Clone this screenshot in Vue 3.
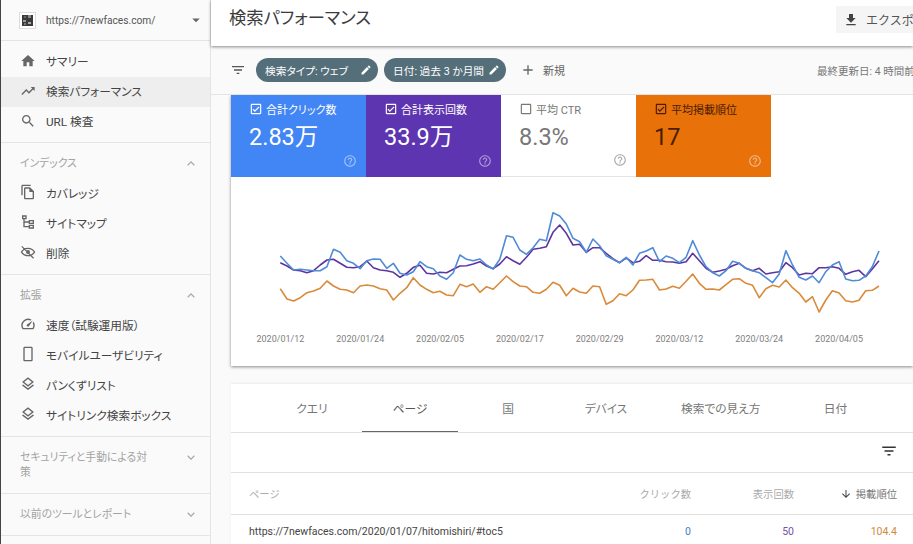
<script setup>
const P = {
  home: 'M10 20v-6h4v6h5v-8h3L12 3 2 12h3v8z',
  trend: 'M16 6l2.29 2.29-4.88 4.88-4-4L2 16.59 3.41 18l6-6 4 4 6.3-6.29L22 12V6z',
  search: 'M15.5 14h-.79l-.28-.27C15.41 12.59 16 11.11 16 9.5 16 5.91 13.09 3 9.5 3S3 5.91 3 9.5 5.91 16 9.5 16c1.61 0 3.09-.59 4.23-1.57l.27.28v.79l5 4.99L20.49 19l-4.99-5zm-6 0C7.01 14 5 11.99 5 9.5S7.01 5 9.5 5 14 7.01 14 9.5 11.99 14 9.5 14z',
  copy: 'M16 1H4c-1.1 0-2 .9-2 2v14h2V3h12V1zm-1 4H8c-1.1 0-1.99.9-1.99 2L6 21c0 1.1.89 2 1.99 2H19c1.1 0 2-.9 2-2V11l-6-6zM8 21V7h6v5h5v9H8z',
  map: 'M3 2h7v6H7v3h6V9h8v6h-8v-2H7v5h6v-2h8v6h-8v-2H5V8H3zM5 4v2h3V4zM15 11v2h4v-2zM15 18v2h4v-2z',
  eye: 'M12 5.5c-5 0-9.2 3-11 6.5 1.8 3.500 6 6.500 11 6.500s9.200-3 11-6.500c-1.800-3.500-6-6.500-11-6.500zm0 2c3.500 0 6.800 1.800 8.700 4.500-1.900 2.700-5.200 4.500-8.700 4.500s-6.800-1.800-8.700-4.500C5.200 9.300 8.500 7.500 12 7.500zM12 9a3 3 0 1 0 0 6 3 3 0 0 0 0-6zM3.300 3 2 4.300 19.700 22l1.300-1.300z',
  speed: 'M20.400 8.600l-1.300 1.900a8 8 0 0 1-.200 7.500H5.100A8 8 0 0 1 15.500 6.900l1.900-1.300A10 10 0 0 0 3.400 19a2 2 0 0 0 1.700 1h13.800a2 2 0 0 0 1.700-1 10 10 0 0 0-.2-10.400zM10.600 15.400a2 2 0 0 0 2.800 0l5.700-8.500-8.500 5.700a2 2 0 0 0 0 2.800z',
  phone: 'M17 1H7c-1.100 0-2 .9-2 2v18c0 1.100.9 2 2 2h10c1.100 0 2-.9 2-2V3c0-1.100-.9-2-2-2zm0 20H7V3h10z',
  layers: 'M11.990 18.540l-7.370-5.730L3 14.070l9 7 9-7-1.630-1.270zM12 16l7.360-5.730L21 9l-9-7-9 7 1.630 1.270L12 16zm0-11.470L17.740 9 12 13.470 6.260 9 12 4.530z',
  filter: 'M10 18h4v-2h-4v2zM3 6v2h18V6H3zm3 7h12v-2H6v2z',
  edit: 'M3 17.250V21h3.750L17.810 9.940l-3.750-3.750L3 17.250zM20.710 7.040c.39-.39.39-1.020 0-1.410l-2.340-2.340c-.39-.39-1.020-.39-1.410 0l-1.830 1.830 3.750 3.750 1.830-1.830z',
  download: 'M19 9h-4V3H9v6H5l7 7 7-7zM5 18v2h14v-2H5z',
  down: 'M20 12l-1.410-1.410L13 16.170V4h-2v12.170l-5.580-5.590L4 12l8 8 8-8z',
  help: 'M11 18h2v-2h-2v2zm1-16C6.480 2 2 6.480 2 12s4.480 10 10 10 10-4.480 10-10S17.520 2 12 2zm0 18c-4.410 0-8-3.590-8-8s3.590-8 8-8 8 3.590 8 8-3.590 8-8 8zm0-14c-2.210 0-4 1.790-4 4h2c0-1.100.9-2 2-2s2 .9 2 2c0 2-3 1.750-3 5h2c0-2.250 3-2.500 3-5 0-2.210-1.790-4-4-4z',
  checked: 'M19 3H5c-1.100 0-2 .9-2 2v14c0 1.100.9 2 2 2h14c1.100 0 2-.9 2-2V5c0-1.100-.9-2-2-2zm0 16H5V5h14v14zM17.990 9l-1.410-1.420-6.590 6.590-2.580-2.570-1.420 1.410 4 3.990z',
  unchecked: 'M19 5v14H5V5h14m0-2H5c-1.100 0-2 .9-2 2v14c0 1.100.9 2 2 2h14c1.100 0 2-.9 2-2V5c0-1.100-.9-2-2-2z',
  plus: 'M19 13h-6v6h-2v-6H5v-2h6V5h2v6h6v2z',
  more: 'M16.590 8.590L12 13.170 7.410 8.590 6 10l6 6 6-6z',
  less: 'M12 8l-6 6 1.410 1.410L12 10.830l4.590 4.580L18 14z',
  drop: 'M7 10l5 5 5-5z'
}

const sections = [
  { items: [
    { icon: 'home', label: 'サマリー' },
    { icon: 'trend', label: '検索パフォーマンス', active: true },
    { icon: 'search', label: 'URL 検査' }
  ] },
  { title: 'インデックス', open: true, items: [
    { icon: 'copy', label: 'カバレッジ' },
    { icon: 'map', label: 'サイトマップ' },
    { icon: 'eye', label: '削除' }
  ] },
  { title: '拡張', open: true, items: [
    { icon: 'speed', label: '速度（試験運用版）' },
    { icon: 'phone', label: 'モバイルユーザビリティ' },
    { icon: 'layers', label: 'パンくずリスト' },
    { icon: 'layers', label: 'サイトリンク検索ボックス' }
  ] },
  { title: 'セキュリティと手動による対策', open: false, items: [] },
  { title: '以前のツールとレポート', open: false, items: [] }
]

const metrics = [
  { label: '合計クリック数', value: '2.83万', cls: 'blue', on: true },
  { label: '合計表示回数', value: '33.9万', cls: 'purple', on: true },
  { label: '平均 CTR', value: '8.3%', cls: 'plain', on: false },
  { label: '平均掲載順位', value: '17', cls: 'orange', on: true }
]

const blue = [168,190,210,208,210,212,212,200,148,157,182,190,206,182,177,178,205,190,220,225,215,185,200,206,228,238,218,165,178,182,177,195,207,178,107,112,150,163,143,118,122,38,48,72,115,125,157,117,137,167,178,188,172,195,160,153,143,185,168,175,188,172,122,165,200,218,228,212,184,190,205,212,218,233,248,222,152,195,232,240,228,248,215,195,185,237,242,241,228,200,153]
const purple = [188,198,210,212,218,212,195,180,178,190,202,203,200,183,203,210,212,217,232,220,202,196,220,222,217,218,208,198,197,192,185,198,206,192,170,182,193,172,148,145,140,97,75,100,135,133,157,143,143,160,176,188,174,188,184,167,181,181,185,186,190,185,160,182,205,217,213,208,197,190,205,212,205,222,218,215,188,203,225,220,221,203,203,200,205,223,215,211,230,207,182]
const orange = [266,297,303,293,278,273,265,243,258,268,270,278,258,255,258,266,270,300,280,263,233,255,268,278,274,285,287,253,260,252,277,260,268,248,228,245,258,260,277,280,268,247,256,287,265,276,280,258,260,313,302,281,287,270,241,240,238,270,267,259,265,244,222,250,268,267,270,254,238,236,250,256,293,266,256,261,240,263,280,306,290,336,300,272,279,302,306,301,272,271,258]

// Source values are read in chart pixels x3; the svg origin sits at y=177.
const toPoints = (s) => s.map((v, i) => `${(49.3 + i * 6.652).toFixed(1)},${(200 + v / 3 - 177).toFixed(1)}`).join(' ')
const series = [
  { color: '#d98a3a', pts: toPoints(orange) },
  { color: '#5e35a0', pts: toPoints(purple) },
  { color: '#4f8bd6', pts: toPoints(blue) }
]
const dates = ['2020/01/12', '2020/01/24', '2020/02/05', '2020/02/17', '2020/02/29', '2020/03/12', '2020/03/24', '2020/04/05']
const tabs = ['クエリ', 'ページ', '国', 'デバイス', '検索での見え方', '日付']
</script>

<template>
  <div class="app">
    <aside class="side">
      <div class="prop">
        <svg class="fav" viewBox="0 0 17 17">
          <rect x=".5" y=".5" width="16" height="16" fill="#fff" stroke="#ddd" />
          <rect x="3" y="3" width="11" height="11" fill="#3a3a3a" />
          <rect x="9" y="3" width="3" height="3" fill="#888" />
          <rect x="4" y="8" width="3" height="2" fill="#999" />
          <rect x="9" y="10" width="3" height="2" fill="#aaa" />
          <rect x="5" y="11" width="2" height="2" fill="#777" />
          <rect x="5" y="4" width="2" height="2" fill="#666" />
        </svg>
        <span class="url">https://7newfaces.com/</span>
        <svg class="drop" viewBox="0 0 24 24"><path :d="P.drop" /></svg>
      </div>
      <section v-for="(s, i) in sections" :key="i" class="sec" :class="{ first: !s.title }">
        <div v-if="s.title" class="sec-head">
          <span class="sec-title">{{ s.title }}</span>
          <svg class="chev" viewBox="0 0 24 24"><path :d="s.open ? P.less : P.more" /></svg>
        </div>
        <div v-for="it in s.items" :key="it.label" class="item" :class="{ active: it.active }">
          <svg class="ico" viewBox="0 0 24 24"><path :d="P[it.icon]" /></svg>
          <span>{{ it.label }}</span>
        </div>
      </section>
    </aside>

    <main class="main">
      <header class="top">
        <h1>検索パフォーマンス</h1>
        <div class="export">
          <svg viewBox="0 0 24 24"><path :d="P.download" /></svg>
          <span>エクスポート</span>
        </div>
      </header>

      <div class="filters">
        <svg class="filter-ico" viewBox="0 0 24 24"><path :d="P.filter" /></svg>
        <span class="chip">検索タイプ: ウェブ<svg viewBox="0 0 24 24"><path :d="P.edit" /></svg></span>
        <span class="chip">日付: 過去 3 か月間<svg viewBox="0 0 24 24"><path :d="P.edit" /></svg></span>
        <svg class="plus" viewBox="0 0 24 24"><path :d="P.plus" /></svg>
        <span class="new">新規</span>
        <span class="updated">最終更新日: 4 時間前</span>
      </div>

      <div class="body">
        <section class="card chart-card">
          <div class="metrics">
            <div v-for="m in metrics" :key="m.label" class="metric" :class="m.cls">
              <div class="m-label">
                <svg viewBox="0 0 24 24"><path :d="m.on ? P.checked : P.unchecked" /></svg>
                <span>{{ m.label }}</span>
              </div>
              <div class="m-value">{{ m.value }}</div>
              <svg class="m-help" viewBox="0 0 24 24"><path :d="P.help" /></svg>
            </div>
          </div>
          <div class="chart">
            <svg class="plot" viewBox="0 0 682 189" width="682" height="189">
              <polyline v-for="l in series" :key="l.color" :points="l.pts" fill="none" :stroke="l.color" stroke-width="1.600" stroke-linejoin="round" />
            </svg>
            <div class="dates">
              <span v-for="d in dates" :key="d">{{ d }}</span>
            </div>
          </div>
        </section>

        <section class="card table-card">
          <nav class="tabs">
            <span v-for="t in tabs" :key="t" class="tab" :class="{ on: t === 'ページ' }">{{ t }}</span>
          </nav>
          <div class="tools">
            <svg viewBox="0 0 24 24"><path :d="P.filter" /></svg>
          </div>
          <div class="row head">
            <span class="c-page">ページ</span>
            <span class="c-num">クリック数</span>
            <span class="c-num">表示回数</span>
            <span class="c-num sort"><svg viewBox="0 0 24 24"><path :d="P.down" /></svg>掲載順位</span>
          </div>
          <div class="row data">
            <span class="c-page">https://7newfaces.com/2020/01/07/hitomishiri/#toc5</span>
            <span class="c-num v-blue">0</span>
            <span class="c-num v-purple">50</span>
            <span class="c-num v-orange">104.4</span>
          </div>
        </section>
      </div>
    </main>
  </div>
</template>

<style>
html, body { margin: 0; overflow: hidden; }
</style>

<style scoped>
.app {
  display: flex;
  width: 913px;
  height: 544px;
  overflow: hidden;
  background: #fafafa;
  color: #3c3c3c;
  font-family: Roboto, "Noto Sans CJK JP", sans-serif;
  font-feature-settings: "palt";
  font-size: 11.700px;
}
svg { display: block; flex: none; }

/* Sidebar */
.side {
  width: 209px;
  flex: none;
  border-left: 1px solid #444;
  border-right: 1px solid #e4e4e4;
  background: #fafafa;
}
.prop {
  display: flex;
  align-items: center;
  height: 40px;
  padding: 0 5px 0 18px;
  border-bottom: 1px solid #e4e4e4;
}
.fav { width: 17px; height: 17px; margin-right: 10px; }
.url { flex: 1; font-size: 10.200px; color: #555; }
.drop { width: 18px; height: 18px; fill: #666; }
.sec { border-bottom: 1px solid #e4e4e4; padding-bottom: 6px; }
.sec.first { padding: 6px 0 5px; }
.sec-head {
  display: flex;
  align-items: flex-start;
  justify-content: space-between;
  padding: 13px 11px 7px 19px;
}
.sec-title { width: 131px; font-size: 10.800px; line-height: 15px; color: #a3a3a3; }
.chev { width: 16px; height: 15px; fill: #a8a8a8; }
.item {
  display: flex;
  align-items: center;
  height: 30px;
  box-sizing: border-box;
  padding: 0 0 2px 19px;
  color: #444;
}
.sec.first .item { padding-bottom: 3px; }
.item.active { background: #eeeeee; }
.ico { width: 16px; height: 16px; margin-right: 10px; fill: #666; }

/* Main */
.main { flex: 1; min-width: 0; display: flex; flex-direction: column; }
.top {
  display: flex;
  justify-content: space-between;
  flex: none;
  height: 46px;
  padding-left: 18px;
  box-sizing: border-box;
  background: #fff;
  box-shadow: 0 1px 3px rgba(0, 0, 0, .45);
  position: relative;
  z-index: 2;
  white-space: nowrap;
  overflow: hidden;
}
h1 { margin: 5px 0 0; font-size: 17.300px; line-height: 26px; font-weight: 400; color: #3c3c3c; }
.export {
  display: flex;
  align-items: center;
  flex: none;
  width: 77px;
  height: 27px;
  margin-top: 6px;
  padding-left: 7px;
  box-sizing: border-box;
  background: #f5f5f5;
  overflow: hidden;
  font-size: 12px;
  font-feature-settings: normal;
  color: #555;
}
.export svg { width: 16px; height: 16px; margin-right: 7px; fill: #444; }
.filters {
  display: flex;
  align-items: center;
  flex: none;
  height: 49px;
  box-sizing: border-box;
  padding-left: 19px;
  border-bottom: 1px solid #e4e4e4;
  white-space: nowrap;
  overflow: hidden;
}
.filter-ico { width: 16px; height: 16px; margin-right: 10px; fill: #555; }
.chip {
  display: flex;
  align-items: center;
  flex: none;
  width: 122px;
  height: 24px;
  box-sizing: border-box;
  padding: 0 6px 0 9px;
  margin-right: 6px;
  border-radius: 12px;
  background: #546e7a;
  color: #fff;
  font-size: 10.700px;
}
.chip svg { width: 12px; height: 12px; margin-left: auto; fill: #fff; }
.plus { width: 16px; height: 16px; margin: 0 7px 0 8px; fill: #666; }
.new { font-size: 11px; color: #666; }
.updated { margin-left: auto; flex: none; width: 96px; overflow: hidden; font-size: 10.500px; color: #777; }
.body { flex: 1; padding-left: 20px; overflow: hidden; }
.card { background: #fff; }
.chart-card { box-shadow: 0 1px 3px rgba(0, 0, 0, .45); }
.metrics { display: flex; height: 82px; }
.metric {
  width: 135px;
  box-sizing: border-box;
  padding: 6px 0 0 18px;
  position: relative;
  color: #fff;
}
.blue { background: #4285f4; }
.purple { background: #5e35b1; }
.plain { color: #777; background: #fff; border-bottom: 1px solid #e4e4e4; }
.orange { background: #e8710a; color: #4a1c00; }
.m-label { display: flex; align-items: center; font-size: 11px; height: 16px; }
.m-label svg { width: 14px; height: 14px; margin-right: 3px; fill: currentColor; }
.m-value { margin-top: 5px; font-size: 23.500px; line-height: 30px; font-weight: 400; }
.m-help { position: absolute; right: 9px; bottom: 9px; width: 14px; height: 14px; fill: rgba(255, 255, 255, .5); }
.plain .m-help { fill: #aaa; }
.chart { position: relative; height: 189px; }
.plot { position: absolute; left: 0; top: 0; }
.dates {
  position: absolute;
  left: 25.500px;
  top: 157px;
  display: flex;
  gap: 31.800px;
  font-size: 9px;
  color: #808080;
  white-space: nowrap;
}
.dates span { width: 48px; }
.table-card { margin-top: 18px; box-shadow: 0 -1px 2px rgba(0, 0, 0, .06); }
.tabs {
  display: flex;
  height: 48px;
  padding-left: 32px;
  border-bottom: 1px solid #e0e0e0;
}
.tab {
  min-width: 96px;
  height: 48px;
  box-sizing: border-box;
  margin: 0 1px;
  padding: 15px 25px 0;
  text-align: center;
  font-size: 11.700px;
  color: #777;
}
.tab.on { border-bottom: 1px solid #666; color: #555; }
.tools {
  display: flex;
  justify-content: flex-end;
  align-items: center;
  height: 36px;
  padding: 0 15px 3px 0;
  border-bottom: 1px solid #e0e0e0;
}
.tools svg { width: 18px; height: 18px; fill: #333; }
.row {
  display: flex;
  align-items: center;
  padding: 0 16px 0 18px;
}
.head { height: 41px; border-bottom: 1px solid #e0e0e0; font-size: 10.300px; font-feature-settings: normal; color: #aaa; }
.data { height: 29px; padding-top: 2px; font-size: 10.500px; color: #444; }
.c-page { flex: 1; }
.c-num { width: 103px; text-align: right; }
.sort { display: flex; align-items: center; justify-content: flex-end; color: #777; }
.sort svg { width: 12px; height: 12px; margin-right: 4px; fill: #444; }
.v-blue { color: #3f7fbf; }
.v-purple { color: #7a4fa8; }
.v-orange { color: #d08a3a; }
</style>
